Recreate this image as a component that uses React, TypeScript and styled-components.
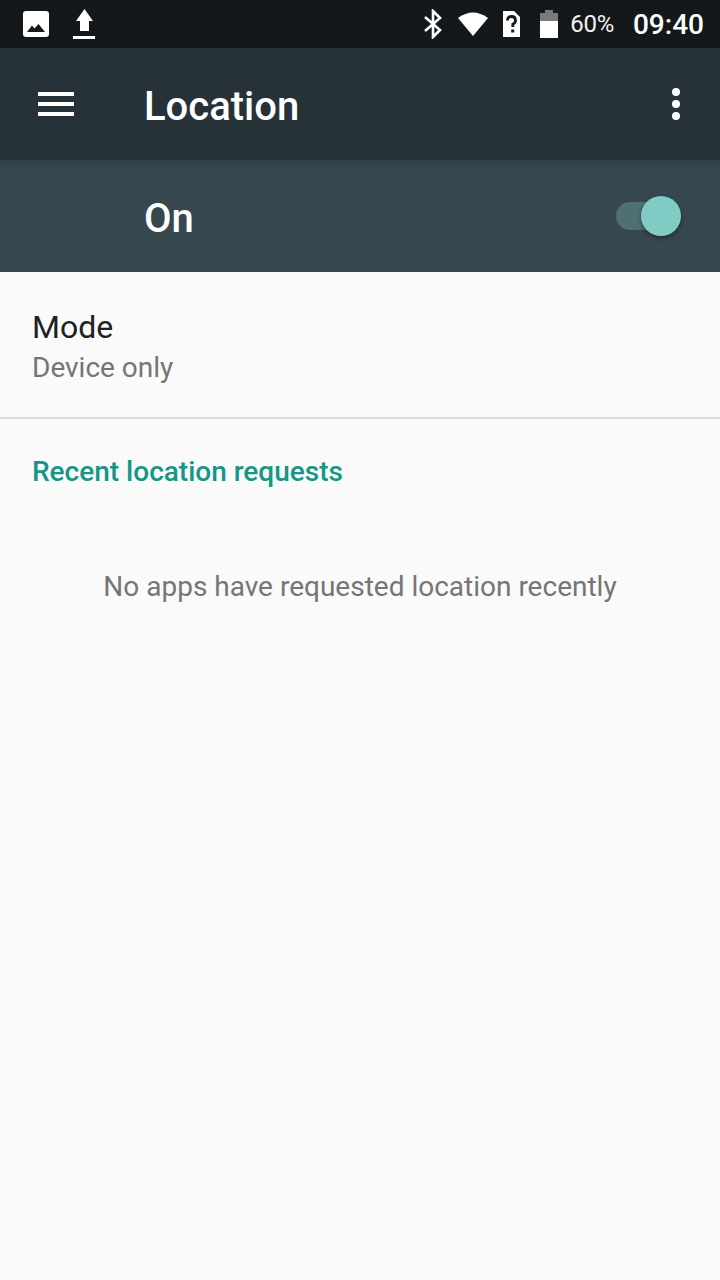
import styled, { createGlobalStyle } from "styled-components";

const Global = createGlobalStyle`
  html, body { margin: 0; padding: 0; background: #fafafa; }
  * { box-sizing: border-box; }
`;

const Screen = styled.div`
  width: 720px;
  height: 1280px;
  background: #fafafa;
  font-family: Roboto, "Liberation Sans", sans-serif;
  display: flex;
  flex-direction: column;
  overflow: hidden;
`;

const StatusBar = styled.div`
  height: 48px;
  background: #15181a;
  display: flex;
  align-items: center;
  padding: 0 16px 0 20px;
  color: #fff;
`;

const StatusLeft = styled.div`
  display: flex;
  align-items: center;
  gap: 19px;
  flex: 1;
`;

const StatusRight = styled.div`
  display: flex;
  align-items: center;
`;

const Icon = styled.svg<{ $ml?: number }>`
  display: block;
  margin-left: ${(p) => p.$ml ?? 0}px;
`;

const Percent = styled.span`
  font-size: 24px;
  margin-left: 11px;
  color: #f2f2f2;
  letter-spacing: -0.3px;
`;

const Clock = styled.span`
  font-size: 28px;
  font-weight: 500;
  margin-left: 19px;
`;

const AppBar = styled.div`
  height: 112px;
  background: #263238;
  display: flex;
  align-items: center;
  padding: 0 40px 0 38px;
`;

const Title = styled.h1`
  margin: 4px 0 0 70px;
  flex: 1;
  font-size: 40px;
  font-weight: 500;
  color: #fff;
`;

const SwitchBar = styled.div`
  height: 112px;
  background: #37474f;
  box-shadow: inset 0 6px 6px -5px rgba(0, 0, 0, 0.18);
  display: flex;
  align-items: center;
  justify-content: space-between;
  padding: 0 42px 0 144px;
`;

const SwitchLabel = styled.span`
  font-size: 40px;
  font-weight: 500;
  color: #fff;
  margin-top: 5px;
`;

const Track = styled.div`
  position: relative;
  width: 62px;
  height: 28px;
  border-radius: 14px;
  background: #4e6f73;
`;

const Thumb = styled.div`
  position: absolute;
  right: -3px;
  top: -6px;
  width: 40px;
  height: 40px;
  border-radius: 50%;
  background: #80cbc4;
  box-shadow: 0 2px 4px rgba(0, 0, 0, 0.4);
`;

const ModeRow = styled.div`
  height: 147px;
  padding: 36px 32px 0;
  border-bottom: 2px solid #dcdcdc;
`;

const RowTitle = styled.div`
  font-size: 32px;
  line-height: 38px;
  color: #212121;
`;

const RowSummary = styled.div`
  font-size: 28px;
  line-height: 40px;
  margin-top: 2px;
  color: #757575;
`;

const CategoryTitle = styled.div`
  font-size: 28px;
  line-height: 36px;
  font-weight: 500;
  color: #159688;
  padding: 35px 32px 0;
`;

const EmptyText = styled.div`
  font-size: 28px;
  line-height: 40px;
  color: #757575;
  text-align: center;
  margin-top: 77px;
`;

function App() {
  return (
    <Screen>
      <Global />
      <StatusBar>
        <StatusLeft>
          <Icon width="32" height="32" viewBox="0 0 32 32">
            <rect x="3" y="3" width="26" height="26" rx="3" fill="#fff" />
            <path d="M7 24 L12 17.5 L14.5 20.5 L18.5 16 L25 24 Z" fill="#15181a" />
          </Icon>
          <Icon width="26" height="32" viewBox="0 0 26 32">
            <path d="M13.5 1 L22 13 H18 V23 H9 V13 H5 Z" fill="#fff" />
            <rect x="2" y="28" width="22" height="3" fill="#fff" />
          </Icon>
        </StatusLeft>
        <StatusRight>
          <Icon width="20" height="30" viewBox="0 0 20 30">
            <path d="M2 8 L17 21 L10 28 V2 L17 9 L2 22" fill="none" stroke="#fff" strokeWidth="2.6" />
          </Icon>
          <Icon $ml={15} width="30" height="24" viewBox="0 0 30 24">
            <path d="M0 6 Q15 -5 30 6 L15 24 Z" fill="#fff" />
          </Icon>
          <Icon $ml={13} width="20" height="28" viewBox="0 0 20 28">
            <path d="M2 1 H13 L19 7 V27 H2 Z" fill="#fff" />
            <path d="M6.5 10.5 Q6.5 6.5 10.5 6.5 Q14.5 6.5 14.5 10.5 Q14.5 13 11.8 14.2 V17" fill="none" stroke="#15181a" strokeWidth="2.8" />
            <rect x="10.2" y="19.5" width="3" height="3" fill="#15181a" />
          </Icon>
          <Icon $ml={18} width="20" height="30" viewBox="0 0 20 30">
            <path d="M6 1 H14 V4 H19 V12 H1 V4 H6 Z" fill="#7a7a7a" />
            <rect x="1" y="12" width="18" height="17" fill="#fff" />
          </Icon>
          <Percent>60%</Percent>
          <Clock>09:40</Clock>
        </StatusRight>
      </StatusBar>
      <AppBar>
        <Icon width="36" height="24" viewBox="0 0 36 24">
          <path d="M0 0 H36 V4 H0 Z M0 10 H36 V14 H0 Z M0 20 H36 V24 H0 Z" fill="#fff" />
        </Icon>
        <Title>Location</Title>
        <Icon width="8" height="32" viewBox="0 0 8 32">
          <circle cx="4" cy="4" r="4" fill="#fff" />
          <circle cx="4" cy="16" r="4" fill="#fff" />
          <circle cx="4" cy="28" r="4" fill="#fff" />
        </Icon>
      </AppBar>
      <SwitchBar>
        <SwitchLabel>On</SwitchLabel>
        <Track>
          <Thumb />
        </Track>
      </SwitchBar>
      <ModeRow>
        <RowTitle>Mode</RowTitle>
        <RowSummary>Device only</RowSummary>
      </ModeRow>
      <CategoryTitle>Recent location requests</CategoryTitle>
      <EmptyText>No apps have requested location recently</EmptyText>
    </Screen>
  );
}

export default App;
